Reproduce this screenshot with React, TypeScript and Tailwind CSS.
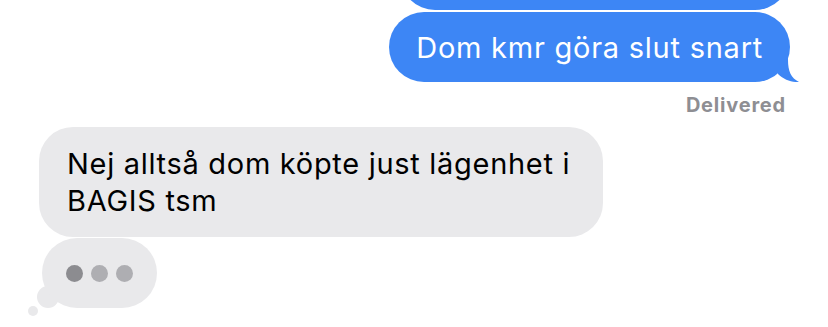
import React from "react";

export default function App() {
  return (
    <div className="w-[828px] h-[327px] bg-white overflow-hidden font-['Inter','Noto_Sans',sans-serif]">
      <div className="flex flex-col items-end pr-[38px] -mt-[60px]">
        <div className="w-[390px] h-[70px] rounded-[35px] bg-[#3d86f5]" />
        <div className="relative mt-[2px] h-[70px] rounded-[35px] bg-[#3d86f5] px-[27px] flex items-center">
          <span className="relative z-10 text-white text-[29px] tracking-[0.75px] leading-none whitespace-nowrap">Dom kmr göra slut snart</span>
          <svg
            className="absolute right-[-10px] bottom-0"
            width="30"
            height="32"
            viewBox="0 0 30 32"
          >
            <path d="M18 0 V10 C18 21 21 28 29 32 C22 32.5 14 30 8 24 L8 0 Z" fill="#3d86f5" />
          </svg>
        </div>
        <div className="mt-[12px] mr-[4px] h-[23px] leading-[23px] text-[20px] tracking-[0.8px] font-bold text-[#8e8e93]">
          Delivered
        </div>
      </div>
      <div className="pl-[39px] mt-[10px]">
        <div className="w-[564px] h-[110px] rounded-[34px] bg-[#e9e9eb] px-[28px] flex items-center">
          <p className="text-black text-[29px] tracking-[0.7px] leading-[37px] whitespace-nowrap">
            Nej alltså dom köpte just lägenhet i
            <br />
            BAGIS tsm
          </p>
        </div>
      </div>
      <div className="pl-[42px] mt-[1px]">
        <div className="relative w-[115px] h-[70px]">
          <div className="absolute left-[-5px] top-[48px] w-[22px] h-[22px] rounded-full bg-[#e9e9eb]" />
          <div className="absolute left-[-14px] top-[68px] w-[10px] h-[10px] rounded-full bg-[#e9e9eb]" />
          <div className="relative w-[115px] h-[70px] rounded-full bg-[#e9e9eb] flex items-center justify-center gap-[8px]">
            <div className="w-[17px] h-[17px] rounded-full bg-[#8c8c90]" />
            <div className="w-[17px] h-[17px] rounded-full bg-[#aeaeb2]" />
            <div className="w-[17px] h-[17px] rounded-full bg-[#aeaeb2]" />
          </div>
        </div>
      </div>
    </div>
  );
}
